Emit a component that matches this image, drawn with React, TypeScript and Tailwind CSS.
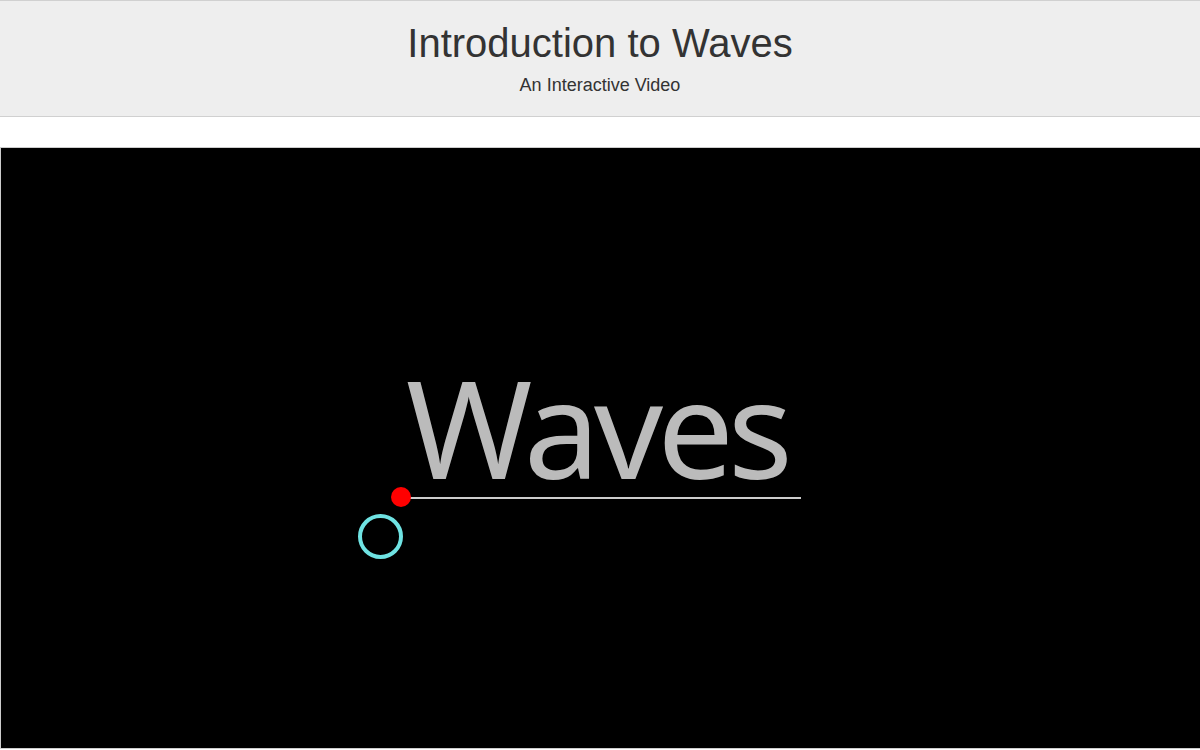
import React from 'react';

const Header: React.FC = () => (
  <header className="border-y border-[#d0d0d0] bg-[#eeeeee] pt-[19px] pb-[20px] text-center text-[#333333] font-['Liberation_Sans',Arial,sans-serif]">
    <h1 className="text-[40px] leading-[46px]">Introduction to Waves</h1>
    <p className="mt-[9px] text-[18px] leading-[21px]">An Interactive Video</p>
  </header>
);

const Stage: React.FC = () => (
  <div className="relative mt-[30px] h-[602px] w-[1202px] border border-[#cccccc] bg-black">
    <div className="absolute left-[405px] top-[211px] text-[136px] leading-none tracking-[-6px] text-[#bbbbbb] font-['Noto_Sans','Open_Sans',sans-serif]">
      Waves
    </div>
    <div className="absolute left-[409px] top-[349px] h-[2px] w-[391px] bg-[#cccccc]" />
    <div className="absolute left-[390px] top-[339px] h-5 w-5 rounded-full bg-[#ff0000]" />
    <div className="absolute left-[357px] top-[366px] h-[45px] w-[45px] rounded-full border-[4px] border-[#6fe3e3]" />
  </div>
);

export default function App() {
  return (
    <div className="h-[750px] w-[1200px] overflow-hidden bg-white">
      <Header />
      <Stage />
    </div>
  );
}
